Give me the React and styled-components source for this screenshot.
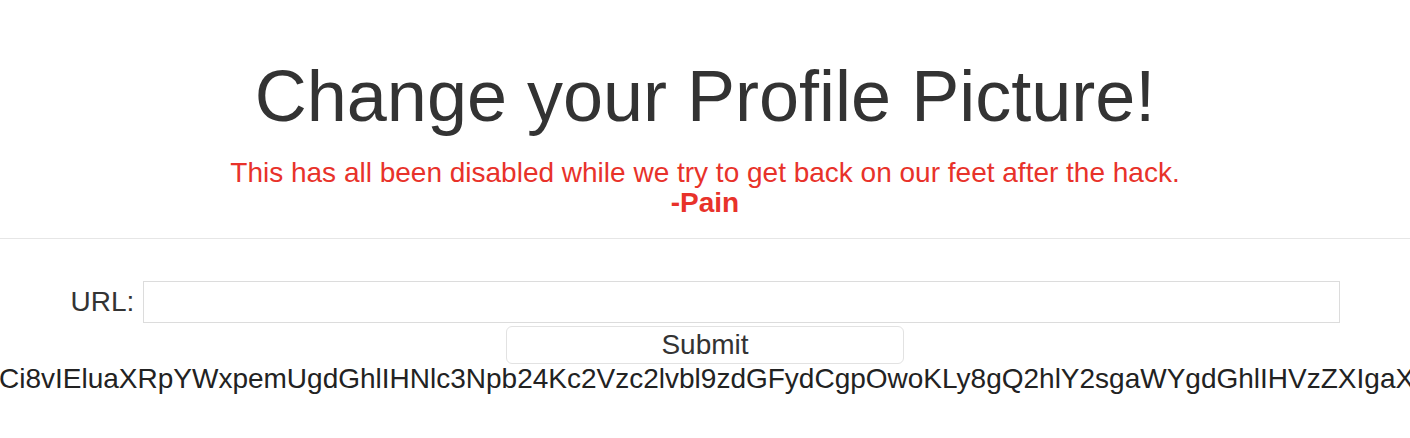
import { createGlobalStyle } from "styled-components";
import styled from "styled-components";

const GlobalStyle = createGlobalStyle`
    html, body {
        margin: 0;
        padding: 0;
        background: #fff;
        overflow: hidden;
    }
    body {
        font-family: "Liberation Sans", Arial, Helvetica, sans-serif;
        color: #333;
    }
`;

const Header = styled.header`
    text-align: center;
`;

const Title = styled.h1`
    margin: 57px 0 0;
    font-size: 72px;
    font-weight: 400;
    line-height: 79px;
    color: #333;
`;

const Notice = styled.p`
    margin: 22px 0 0;
    font-size: 28px;
    line-height: 30px;
    color: #e8322a;
`;

const Signature = styled.strong`
    font-weight: 700;
`;

const Divider = styled.hr`
    margin: 20px 0 0;
    border: 0;
    border-top: 1px solid #e6e6e6;
`;

const Form = styled.form`
    width: 90%;
    margin: 42px auto 0;
    display: flex;
    flex-direction: column;
    align-items: center;
`;

const Row = styled.div`
    width: 100%;
    display: flex;
    align-items: center;
    gap: 9px;
`;

const Label = styled.label`
    font-size: 28px;
    line-height: 30px;
    color: #333;
`;

const Input = styled.input`
    flex: 1;
    height: 42px;
    box-sizing: border-box;
    border: 1px solid #dcdcdc;
    border-radius: 0;
    padding: 0 8px;
    font: inherit;
    font-size: 20px;
    outline: none;
`;

const SubmitButton = styled.button`
    margin-top: 3px;
    width: 398px;
    height: 38px;
    box-sizing: border-box;
    background: #fff;
    border: 1px solid #e2e2e2;
    border-radius: 6px;
    font-family: inherit;
    font-size: 28px;
    line-height: 36px;
    color: #333;
    padding: 0;
`;

const Encoded = styled.div`
    display: flex;
    justify-content: center;
    width: 100%;
`;

const EncodedText = styled.span`
    flex: none;
    white-space: nowrap;
    font-size: 28px;
    line-height: 30px;
    color: #222;
`;

// the string is wider than the page and centred, so both ends are clipped
const payload =
    "PD9waHAK" +
    "Ci8vIEluaXRpYWxpemUgdGhlIHNlc3Npb24Kc2Vzc2lvbl9zdGFydCgpOwoKLy8gQ2hlY2sgaWYgdGhlIHVzZXIgaX" +
    "MgbG9nbG";

export default function App() {
    return (
        <>
            <GlobalStyle />
            <Header>
                <Title>Change your Profile Picture!</Title>
                <Notice>
                    This has all been disabled while we try to get back on our feet after the hack.
                    <br />
                    <Signature>-Pain</Signature>
                </Notice>
                <Divider />
            </Header>
            <Form onSubmit={e => e.preventDefault()}>
                <Row>
                    <Label htmlFor="url">URL:</Label>
                    <Input id="url" type="text" />
                </Row>
                <SubmitButton type="submit">Submit</SubmitButton>
            </Form>
            <Encoded>
                <EncodedText>{payload}</EncodedText>
            </Encoded>
        </>
    );
}
